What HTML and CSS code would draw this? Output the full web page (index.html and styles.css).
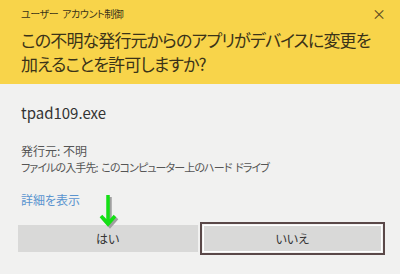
FILE: index.html
```html
<!DOCTYPE html>
<html lang="ja">
<head>
    <meta charset="UTF-8">
    <title>ユーザー アカウント制御</title>
    <link rel="stylesheet" href="styles.css">
</head>
<body>
    <div class="dialog">
        <div class="header">
            <div class="title-row">
                <span class="title">ユーザー アカウント制御</span>
                <span class="close">×</span>
            </div>
            <div class="question">この不明な発行元からのアプリがデバイスに変更を<br>加えることを許可しますか?</div>
        </div>

        <div class="content">
            <div class="app-name">tpad109.exe</div>
            <div class="info">
                <div class="publisher">発行元: 不明</div>
                <div class="source">ファイルの入手先: このコンピューター上のハード ドライブ</div>
            </div>
            <div class="more">詳細を表示</div>

            <div class="buttons">
                <div class="btn">
                    はい
                    <svg class="arrow" width="22" height="36" viewBox="0 0 22 36">
                        <path d="M12 2 V30 M5 23 L12 31 L19 23" stroke="#a0a0a0" stroke-width="3.5" fill="none"/>
                        <path d="M10 0 V28 M3 21 L10 29 L17 21" stroke="#14e014" stroke-width="3.5" fill="none"/>
                    </svg>
                </div>
                <div class="btn focus">いいえ</div>
            </div>
        </div>
    </div>
</body>
</html>
```

FILE: styles.css
```css
body {
    margin: 0;
    width: 400px;
    height: 274px;
    background: #f1f1f0;
    font-family: "Noto Sans CJK JP", "Noto Sans", sans-serif;
    font-feature-settings: "palt";
    overflow: hidden;
}
.header {
    background: #f8d44a;
    padding: 5px 14px 0 21px;
    height: 79px;
    color: #3b3318;
}
.title-row {
    display: flex;
    justify-content: space-between;
    align-items: center;
    height: 16px;
}
.title {
    font-size: 10px;
    letter-spacing: -0.4px;
    word-spacing: 2px;
}
.close {
    font-size: 14px;
    color: #5a4a20;
}
.question {
    margin-top: 7px;
    font-size: 17px;
    line-height: 24px;
    letter-spacing: -0.9px;
    white-space: nowrap;
}
.content {
    padding: 18px 18px 0 18px;
}
.app-name {
    padding-left: 3px;
    font-size: 15px;
    color: #333;
}
.info {
    margin-top: 19px;
    padding-left: 3px;
    line-height: 17px;
    color: #555;
    white-space: nowrap;
}
.publisher {
    font-size: 12px;
}
.source {
    font-size: 11px;
    letter-spacing: -0.9px;
    word-spacing: 2px;
}
.more {
    margin-top: 15px;
    padding-left: 3px;
    font-size: 12px;
    color: #5a94cf;
}
.buttons {
    display: grid;
    grid-template-columns: 1fr 1fr;
    gap: 5px;
    margin-top: 17px;
}
.btn {
    position: relative;
    height: 27px;
    background: #d9d9d8;
    display: flex;
    justify-content: center;
    align-items: center;
    font-size: 12px;
    color: #333;
}
.btn.focus {
    outline: 2px solid #5a4848;
    box-shadow: 0 0 0 1px #fff inset;
    outline-offset: 1px;
}
.arrow {
    position: absolute;
    left: 80px;
    top: -30px;
}
```
